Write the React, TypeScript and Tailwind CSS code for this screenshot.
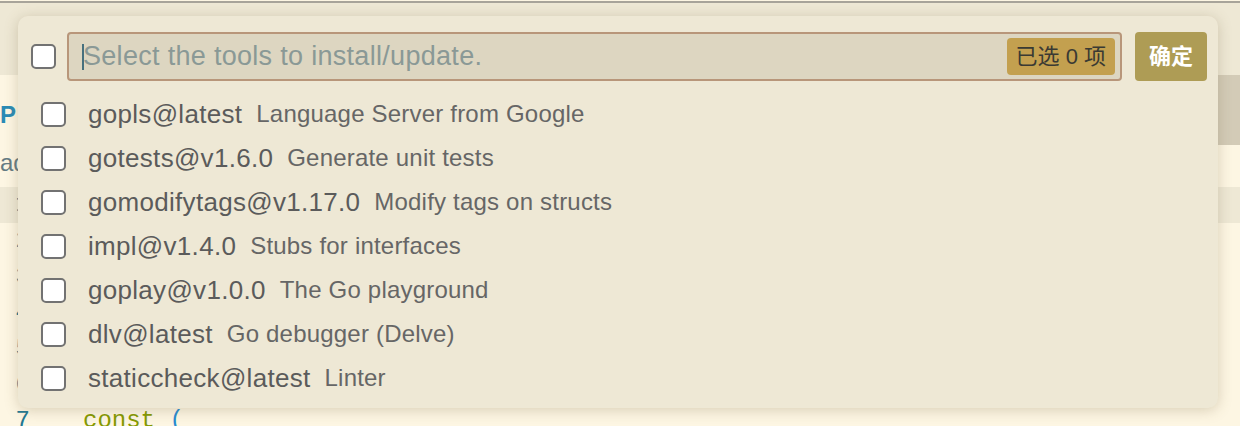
import React from 'react';

interface Tool {
  name: string;
  desc: string;
}

const tools: Tool[] = [
  { name: 'gopls@latest', desc: 'Language Server from Google' },
  { name: 'gotests@v1.6.0', desc: 'Generate unit tests' },
  { name: 'gomodifytags@v1.17.0', desc: 'Modify tags on structs' },
  { name: 'impl@v1.4.0', desc: 'Stubs for interfaces' },
  { name: 'goplay@v1.0.0', desc: 'The Go playground' },
  { name: 'dlv@latest', desc: 'Go debugger (Delve)' },
  { name: 'staticcheck@latest', desc: 'Linter' },
];

const sans = "font-['Liberation_Sans','Noto_Sans_CJK_SC',sans-serif]";

const Box = () => (
  <span className="block h-[25px] w-[25px] shrink-0 rounded-[5px] border-2 border-[#727272] bg-white" />
);

export default function App() {
  return (
    <div className={`relative h-[426px] w-[1240px] overflow-hidden bg-[#fdf6e3] ${sans}`}>
      {/* editor behind */}
      <div className="border-t-2 border-[#a8a49a] bg-[#eee8d5] h-[74px] mt-[1px]" />
      <div className="relative">
        <div className="flex h-[70px] items-center justify-end">
          <div className="h-full w-[300px] bg-[#d3cbb7]" />
        </div>
        <div className="absolute left-0 top-[22px] flex items-center gap-[4px] text-[24px] text-[#222222]">
          <span className="font-bold text-[#2a8bb5]">P</span>
          <span>a</span>
        </div>
        <div className="text-[24px] leading-[36px] text-[#657b83]">ad</div>
        <div className="h-[6px]" />
        <div className="font-['Liberation_Mono',monospace] text-[24px] leading-[36px]">
          {[1, 2, 3, 4, 5, 6, 7].map((n) => (
            <div key={n} className={`flex ${n === 1 ? 'bg-[#eee8d5]' : ''}`}>
              <span className="w-[30px] text-right text-[#237893]">{n}</span>
              {n === 7 && (
                <span className="ml-[53px] text-[#859900]">
                  const <span className="text-[#268bd2]">(</span>
                </span>
              )}
            </div>
          ))}
        </div>
      </div>

      {/* quick pick */}
      <div className="absolute left-[18px] top-[16px] h-[392px] w-[1200px] rounded-[10px] bg-[#eee8d5] shadow-[0_2px_14px_rgba(120,100,60,0.28)]">
        <div className="flex items-center pl-[13px] pr-[11px] pt-[16px]">
          <Box />
          <div className="ml-[11px] flex h-[49px] flex-1 items-center rounded-[4px] border-2 border-[#b8967a] bg-[#ddd6c1] pl-[13px] pr-[5px]">
            <span className="h-[26px] w-[2px] bg-[#46707e]" />
            <span className="-ml-[1px] flex-1 text-[27px] tracking-[0.3px] text-[#8a9996]">
              Select the tools to install/update.
            </span>
            <span className="flex h-[37px] items-center rounded-[4px] bg-[#c3a04f] px-[9px] text-[22px] text-[#3a3a33]">
              已选 0 项
            </span>
          </div>
          <button className="ml-[13px] flex h-[49px] w-[72px] items-center justify-center rounded-[4px] bg-[#ae9c55] text-[22px] font-semibold text-white">
            确定
          </button>
        </div>
        <div className="mt-[11px]">
          {tools.map((t) => (
            <div key={t.name} className="flex h-[44px] items-center pl-[23px]">
              <Box />
              <span className="ml-[22px] text-[26px] tracking-[0.3px] text-[#5b5b5b]">{t.name}</span>
              <span className="ml-[14px] text-[24px] tracking-[0.2px] text-[#666666]">{t.desc}</span>
            </div>
          ))}
        </div>
      </div>
    </div>
  );
}
